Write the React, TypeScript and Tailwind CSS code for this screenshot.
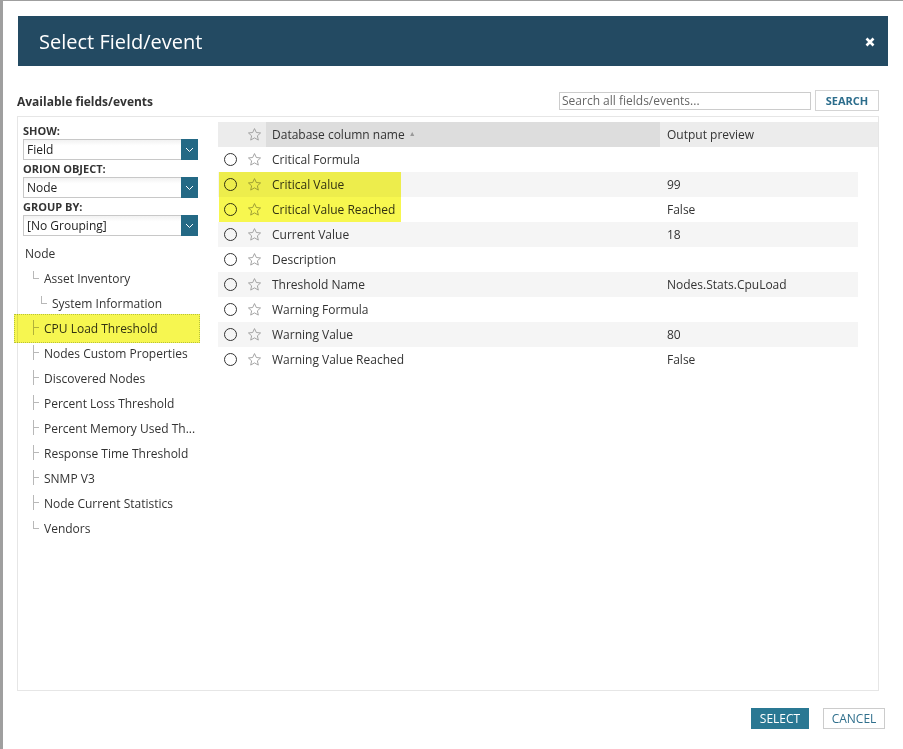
import React from "react";

const font = { fontFamily: '"Open Sans", "Noto Sans", sans-serif' };

type TreeItem = { label: string; level: number; last?: boolean; highlight?: boolean };

const tree: TreeItem[] = [
  { label: "Node", level: 0 },
  { label: "Asset Inventory", level: 1, last: true },
  { label: "System Information", level: 2, last: true },
  { label: "CPU Load Threshold", level: 1, highlight: true },
  { label: "Nodes Custom Properties", level: 1 },
  { label: "Discovered Nodes", level: 1 },
  { label: "Percent Loss Threshold", level: 1 },
  { label: "Percent Memory Used Th...", level: 1 },
  { label: "Response Time Threshold", level: 1 },
  { label: "SNMP V3", level: 1 },
  { label: "Node Current Statistics", level: 1 },
  { label: "Vendors", level: 1, last: true },
];

const rows = [
  ["Critical Formula", ""],
  ["Critical Value", "99"],
  ["Critical Value Reached", "False"],
  ["Current Value", "18"],
  ["Description", ""],
  ["Threshold Name", "Nodes.Stats.CpuLoad"],
  ["Warning Formula", ""],
  ["Warning Value", "80"],
  ["Warning Value Reached", "False"],
];

function Star({ className = "" }: { className?: string }) {
  return (
    <svg width="15" height="15" viewBox="0 0 24 24" className={className}>
      <path
        d="M12 2.5l2.9 6.3 6.8.7-5.1 4.6 1.5 6.8L12 17.4l-6.1 3.5 1.5-6.8-5.1-4.6 6.8-.7z"
        fill="none"
        stroke="currentColor"
        strokeWidth="1.4"
        strokeLinejoin="round"
      />
    </svg>
  );
}

function Select({ value }: { value: string }) {
  return (
    <div className="flex h-[21px] w-[175px] border border-[#c8c8c8] bg-gradient-to-b from-[#f2f2f2] to-white to-[30%]">
      <div className="flex-1 pl-[3px] text-[12px] leading-[19px] text-[#222]">{value}</div>
      <div className="flex w-[17px] items-center justify-center bg-[#246985] -my-px -mr-px">
        <svg width="9" height="6" viewBox="0 0 9 6">
          <path d="M1 1l3.5 3.5L8 1" fill="none" stroke="white" strokeWidth="1" />
        </svg>
      </div>
    </div>
  );
}

function Label({ text, first }: { text: string; first?: boolean }) {
  return (
    <div className={`${first ? "pt-[5px]" : ""} h-[17px] text-[11px] font-bold leading-[17px] text-[#333] box-content`}>
      {text}
    </div>
  );
}

function Connector({ last }: { last?: boolean }) {
  if (last) {
    return (
      <div className="h-full w-[6px] shrink-0">
        <div className="mt-[5px] h-[8px] w-[6px] border-b border-l border-[#b8b8b8]" />
      </div>
    );
  }
  return (
    <div className="h-full w-[6px] shrink-0">
      <div className="mt-[4px] h-[8px] w-[6px] border-b border-l border-[#b8b8b8]" />
      <div className="h-[7px] w-[6px] border-l border-[#b8b8b8]" />
    </div>
  );
}

export default function App() {
  return (
    <div className="min-h-screen bg-[#9f9f9f] pl-[3px] pt-px" style={font}>
      <div className="flex h-[748px] flex-col bg-white">
        {/* header */}
        <div className="ml-[15px] mt-[15px] flex h-[50px] w-[870px] items-center justify-between bg-[#234a62] pl-[21px] pr-[13px]">
          <div className="pt-[2px] text-[20px] leading-[20px] text-white">Select Field/event</div>
          <svg width="10" height="10" viewBox="0 0 10 10" className="mt-[2px]">
            <path d="M1.5 1.5l7 7M8.5 1.5l-7 7" stroke="white" strokeWidth="2.6" />
          </svg>
        </div>

        {/* title + search */}
        <div className="ml-[14px] mt-[24px] flex h-[21px] w-[862px] items-center justify-between">
          <div className="pt-[3px] text-[12px] font-bold text-[#333]">Available fields/events</div>
          <div className="flex items-center gap-[4px]">
            <div className="h-[18px] w-[252px] border border-[#cccccc] pl-[2px] text-[12px] leading-[16px] text-[#666]">
              Search all fields/events...
            </div>
            <div className="flex h-[21px] w-[64px] items-center justify-center border border-[#d4d4d4] pt-px text-[11px] font-bold text-[#2c6d8c]">
              SEARCH
            </div>
          </div>
        </div>

        {/* main box */}
        <div className="ml-[14px] mt-[5px] flex h-[575px] w-[862px] border border-[#e6e6e6]">
          {/* left panel */}
          <div className="w-[200px] shrink-0 pl-[5px]">
            <Label text="SHOW:" first />
            <Select value="Field" />
            <Label text="ORION OBJECT:" />
            <Select value="Node" />
            <Label text="GROUP BY:" />
            <Select value="[No Grouping]" />
            <div className="mt-[5px] text-[12px] text-[#333]">
              {tree.map((t) => (
                <div key={t.label} className="relative flex h-[25px] items-start">
                  {t.highlight && (
                    <div className="absolute left-[-9px] top-[-2px] h-[29px] w-[186px] border border-dotted border-[#b7c23a] bg-[#f6f650] mix-blend-multiply" />
                  )}
                  {t.level === 0 && <div className="pl-[2px] leading-[25px]">{t.label}</div>}
                  {t.level === 1 && (
                    <>
                      <div className="w-[10px] shrink-0" />
                      <Connector last={t.last} />
                      <div className="whitespace-nowrap pl-[5px] leading-[25px]">{t.label}</div>
                    </>
                  )}
                  {t.level === 2 && (
                    <>
                      <div className="w-[18px] shrink-0" />
                      <Connector last={t.last} />
                      <div className="whitespace-nowrap pl-[5px] leading-[25px]">{t.label}</div>
                    </>
                  )}
                </div>
              ))}
            </div>
          </div>

          {/* right table */}
          <div className="flex-1 pt-[5px] text-[12px] text-[#333]">
            <div className="flex h-[25px] bg-[#ececec]">
              <div className="w-[24px]" />
              <div className="flex w-[24px] items-center justify-center text-[#999]">
                <Star />
              </div>
              <div className="flex w-[394px] items-center bg-[#dddddd] pl-[6px]">
                Database column name
                <span className="ml-[4px] text-[7px] text-[#999]">▲</span>
              </div>
              <div className="flex flex-1 items-center pl-[7px]">Output preview</div>
            </div>
            <div className="relative w-[640px]">
              {rows.map(([name, val], i) => (
                <div key={name} className={`flex h-[25px] items-center ${i % 2 === 1 ? "bg-[#f5f5f5]" : ""}`}>
                  <div className="flex w-[24px] items-center justify-center">
                    <div className="h-[13px] w-[13px] rounded-full border border-[#333]" />
                  </div>
                  <div className="flex w-[24px] items-center justify-center text-[#999]">
                    <Star />
                  </div>
                  <div className="w-[394px] pl-[6px]">{name}</div>
                  <div className="flex-1 pl-[7px]">{val}</div>
                </div>
              ))}
              <div className="absolute left-px top-[25px] h-[50px] w-[182px] bg-[#f7f74f] mix-blend-multiply" />
            </div>
          </div>
        </div>

        {/* footer */}
        <div className="mt-[17px] flex justify-end gap-[14px] pr-[18px]">
          <div className="flex h-[21px] w-[58px] items-center justify-center bg-[#2a7893] text-[12px] text-white">
            SELECT
          </div>
          <div className="flex h-[21px] w-[62px] items-center justify-center border border-[#cccccc] text-[12px] text-[#2f6f8c]">
            CANCEL
          </div>
        </div>
      </div>
    </div>
  );
}
